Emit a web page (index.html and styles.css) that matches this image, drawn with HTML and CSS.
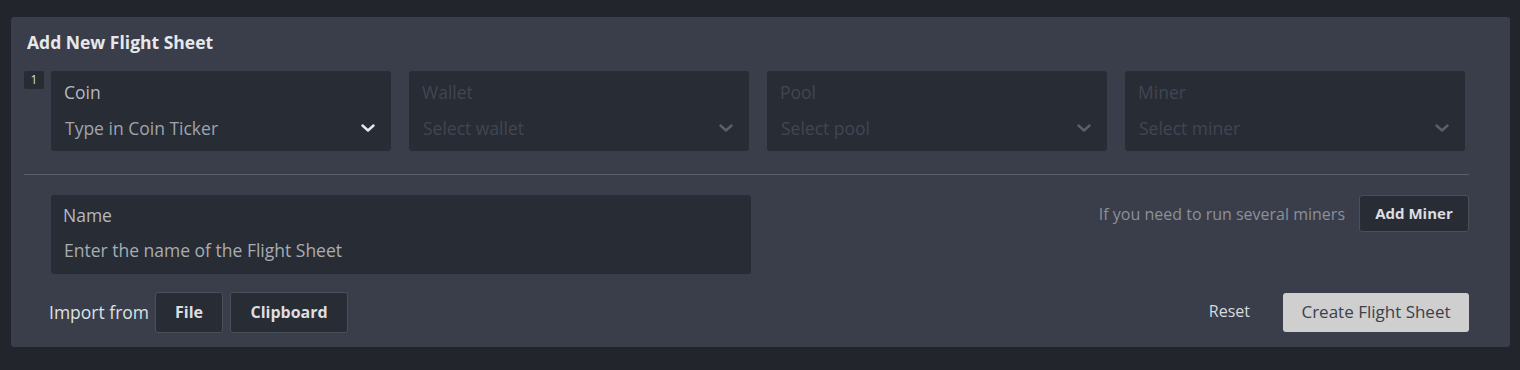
FILE: index.html
```html
<!DOCTYPE html>
<html>
<head>
<meta charset="utf-8">
<link rel="stylesheet" href="styles.css">
</head>
<body>
<div class="panel">
  <h2 class="title">Add New Flight Sheet</h2>
  <div class="miner-row">
    <span class="badge">1</span>
    <div class="fields">
      <div class="field">
        <div class="label">Coin</div>
        <div class="value"><span>Type in Coin Ticker</span>
          <svg class="chev" viewBox="0 0 14 8" width="14" height="8"><path d="M1.5 1.5 L7 6.5 L12.5 1.5" fill="none" stroke="currentColor" stroke-width="2.4" stroke-linecap="round" stroke-linejoin="round"/></svg>
        </div>
      </div>
      <div class="field disabled">
        <div class="label">Wallet</div>
        <div class="value"><span>Select wallet</span>
          <svg class="chev" viewBox="0 0 14 8" width="14" height="8"><path d="M1.5 1.5 L7 6.5 L12.5 1.5" fill="none" stroke="currentColor" stroke-width="2.4" stroke-linecap="round" stroke-linejoin="round"/></svg>
        </div>
      </div>
      <div class="field disabled">
        <div class="label">Pool</div>
        <div class="value"><span>Select pool</span>
          <svg class="chev" viewBox="0 0 14 8" width="14" height="8"><path d="M1.5 1.5 L7 6.5 L12.5 1.5" fill="none" stroke="currentColor" stroke-width="2.4" stroke-linecap="round" stroke-linejoin="round"/></svg>
        </div>
      </div>
      <div class="field disabled">
        <div class="label">Miner</div>
        <div class="value"><span>Select miner</span>
          <svg class="chev" viewBox="0 0 14 8" width="14" height="8"><path d="M1.5 1.5 L7 6.5 L12.5 1.5" fill="none" stroke="currentColor" stroke-width="2.4" stroke-linecap="round" stroke-linejoin="round"/></svg>
        </div>
      </div>
    </div>
  </div>
  <hr class="divider">
  <div class="name-row">
    <div class="name-field">
      <div class="label">Name</div>
      <div class="value">Enter the name of the Flight Sheet</div>
    </div>
    <div class="add-miner">
      <span class="hint">If you need to run several miners</span>
      <button class="btn btn-add">Add Miner</button>
    </div>
  </div>
  <div class="actions">
    <div class="import">
      <span class="import-label">Import from</span>
      <button class="btn btn-file">File</button>
      <button class="btn btn-clip">Clipboard</button>
    </div>
    <div class="submit">
      <button class="reset">Reset</button>
      <button class="create">Create Flight Sheet</button>
    </div>
  </div>
</div>
</body>
</html>
```
FILE: styles.css
```css
* { box-sizing: border-box; }
html, body { margin: 0; padding: 0; }
body {
  background: #22252c;
  font-family: "Open Sans", "Noto Sans", sans-serif;
  width: 1520px;
  height: 370px;
  overflow: hidden;
}
.panel {
  margin: 17px 0 0 11px;
  width: 1499px;
  height: 330px;
  background: #393e4a;
  border-radius: 3px;
  padding: 14px 41px 0 13px;
}
.title {
  margin: 0;
  font-size: 17.5px;
  font-weight: 700;
  line-height: 22px;
  color: #e6e8ec;
  padding-left: 3px;
}
.miner-row {
  display: flex;
  margin-top: 18px;
}
.badge {
  width: 20px;
  height: 18px;
  border-radius: 2px;
  background: #272b33;
  color: #d8dade;
  font-size: 12px;
  line-height: 18px;
  text-align: center;
  margin-right: 7px;
}
.fields {
  display: flex;
  gap: 18px;
}
.field {
  width: 340px;
  height: 80px;
  background: #282c35;
  border-radius: 3px;
  padding: 9px 16px 0 13px;
}
.label {
  font-size: 17.5px;
  line-height: 24px;
  color: #b5b9c1;
}
.value {
  display: flex;
  justify-content: space-between;
  align-items: center;
  margin-top: 12px;
  font-size: 17.5px;
  line-height: 24px;
  color: #a0a4ac;
  padding-left: 1px;
}
.chev { color: #e8e9ec; display: block; }
.field.disabled .label, .field.disabled .value { color: #414652; }
.field.disabled .chev { color: #5a5f6a; }
.divider {
  margin: 23px 0 0 0;
  border: 0;
  height: 1px;
  background: #5a5f6b;
}
.name-row {
  display: flex;
  justify-content: space-between;
  align-items: flex-start;
  margin-top: 20px;
}
.name-field {
  margin-left: 27px;
  width: 700px;
  height: 79px;
  background: #282c35;
  border-radius: 3px;
  padding: 8px 12px 0 12px;
}
.name-field .value { margin-top: 11px; color: #a8acb3; padding-left: 1px; }
.add-miner {
  display: flex;
  align-items: center;
  gap: 14px;
}
.hint { font-size: 16px; color: #8c9099; }
.btn {
  font-family: inherit;
  background: #282c35;
  border: 1px solid #4a4f5a;
  border-radius: 3px;
  color: #dcdee2;
  font-weight: 700;
  font-size: 15px;
  padding: 0 0 2px 0;
}
.btn-add { width: 110px; height: 37px; }
.actions {
  display: flex;
  justify-content: space-between;
  align-items: center;
  margin-top: 18px;
}
.import {
  display: flex;
  align-items: center;
  margin-left: 25px;
}
.import-label { font-size: 17.5px; color: #dfe1e4; margin-right: 6px; padding-bottom: 1px; }
.btn-file { width: 68px; height: 41px; margin-right: 7px; font-size: 16px; }
.btn-clip { width: 118px; height: 41px; font-size: 16px; }
.submit { display: flex; align-items: center; }
.reset {
  font-family: inherit;
  background: none;
  border: 0;
  color: #d8dade;
  font-size: 16px;
  padding: 0 0 3px 0;
  margin-right: 33px;
}
.create {
  font-family: inherit;
  width: 186px;
  height: 39px;
  background: #cfcfcf;
  border: 0;
  border-radius: 3px;
  color: #3b404b;
  font-size: 17px;
  padding: 0 0 2px 0;
}
```
